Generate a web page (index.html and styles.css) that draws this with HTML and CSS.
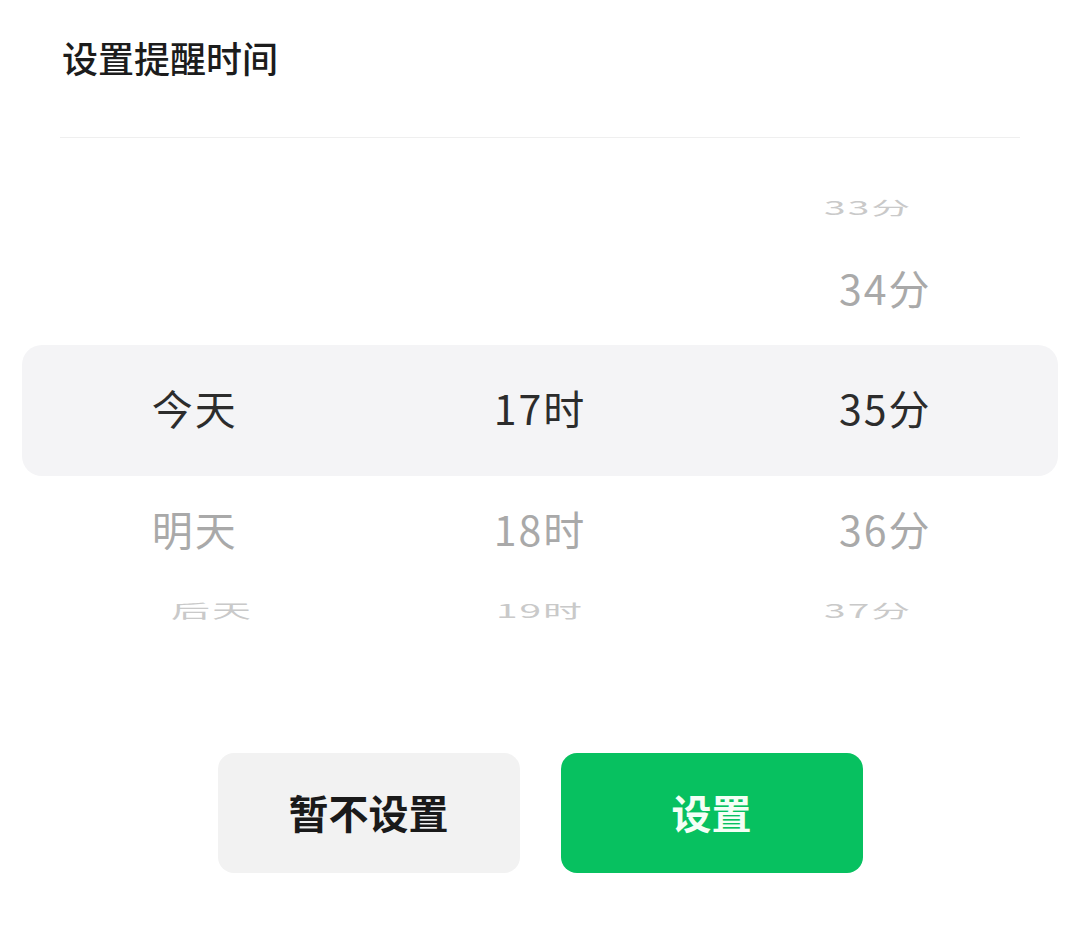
FILE: index.html
```html
<!DOCTYPE html>
<html lang="zh-CN">
<head>
    <meta charset="UTF-8">
    <meta name="viewport" content="width=device-width, initial-scale=1.0">
    <title>设置提醒时间</title>
    <link rel="stylesheet" href="styles.css">
</head>
<body>
    <div class="sheet">
        <div class="sheet-header">
            <h1 class="sheet-title">设置提醒时间</h1>
        </div>
        <div class="divider"></div>

        <div class="picker">
            <div class="picker-row far far-top">
                <span class="cell"></span>
                <span class="cell"></span>
                <span class="cell">33分</span>
            </div>
            <div class="picker-row near">
                <span class="cell"></span>
                <span class="cell"></span>
                <span class="cell">34分</span>
            </div>
            <div class="picker-row current">
                <span class="cell">今天</span>
                <span class="cell">17时</span>
                <span class="cell">35分</span>
            </div>
            <div class="picker-row near">
                <span class="cell">明天</span>
                <span class="cell">18时</span>
                <span class="cell">36分</span>
            </div>
            <div class="picker-row far far-bottom">
                <span class="cell">后天</span>
                <span class="cell">19时</span>
                <span class="cell">37分</span>
            </div>
        </div>

        <div class="actions">
            <button class="btn btn-cancel">暂不设置</button>
            <button class="btn btn-confirm">设置</button>
        </div>
    </div>
</body>
</html>
```

FILE: styles.css
```css
/* Global */
body {
    margin: 0;
    padding: 0;
    background-color: #ffffff;
    font-family: "Noto Sans CJK SC", "Noto Sans", sans-serif;
}

.sheet {
    width: 1080px;
    height: 932px;
    background: #ffffff;
}

/* Header */
.sheet-header {
    height: 137px;
    box-sizing: border-box;
    padding: 32px 62px 0;
}

.sheet-title {
    margin: 0;
    font-size: 36px;
    line-height: 50px;
    font-weight: 500;
    color: #1c1c1c;
}

.divider {
    height: 1px;
    margin: 0 60px;
    background: #efefef;
}

/* Picker */
.picker {
    padding: 43px 22px 0;
}

.picker-row {
    display: grid;
    grid-template-columns: 1fr 1fr 1fr;
    align-items: center;
    text-align: center;
}

.cell {
    font-size: 41px;
    line-height: 1;
    letter-spacing: 2px;
    padding-bottom: 6px;
}

.picker-row.current {
    height: 131px;
    background: #f4f4f6;
    border-radius: 20px;
    color: #2c2c2c;
}

.picker-row.near {
    height: 110px;
    color: #a9a9a9;
}

.picker-row.far {
    color: #c9c9c9;
    transform: scale(0.95, 0.45);
}

.far-top {
    height: 54px;
}

.far-bottom {
    height: 50px;
}

/* Buttons */
.actions {
    display: flex;
    justify-content: center;
    gap: 41px;
    margin-top: 117px;
}

.btn {
    width: 302px;
    height: 120px;
    border: 0;
    border-radius: 16px;
    font-family: inherit;
    font-size: 40px;
    font-weight: 700;
    padding-bottom: 4px;
    cursor: pointer;
}

.btn-cancel {
    background: #f2f2f2;
    color: #1a1a1a;
}

.btn-confirm {
    background: #07c160;
    color: #f4fff6;
}
```
